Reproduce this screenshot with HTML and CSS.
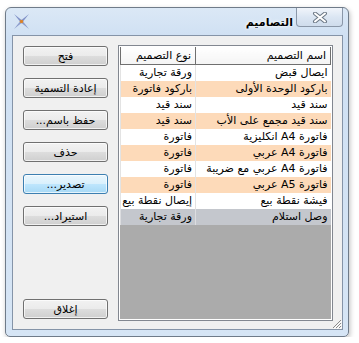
FILE: index.html
```html
<!DOCTYPE html>
<html lang="ar">
<head>
  <meta charset="UTF-8" />
  <title>التصاميم</title>
  <link rel="stylesheet" href="styles.css">
</head>
<body>

<div class="window">
  <div class="titlebar">
    <svg class="app-icon" width="15" height="15" viewBox="0 0 15 15">
      <polygon points="0,0 7.5,6 6,7.5" fill="#7f90c6" />
      <polygon points="15,0 7.5,6 9,7.5" fill="#7f90c6" />
      <polygon points="0,15 6,7.5 7.5,9" fill="#8c9ccc" />
      <polygon points="15,15 9,7.5 7.5,9" fill="#8c9ccc" />
      <circle cx="7.5" cy="7.5" r="1.8" fill="#d9822b" />
    </svg>
    <div class="title">التصاميم</div>
    <div class="close-btn">
      <svg width="16" height="11" viewBox="0 0 16 11">
        <path d="M3 1.5 L13 9.5 M13 1.5 L3 9.5" stroke="#6b7785" stroke-width="4" stroke-linecap="round" />
        <path d="M3 1.5 L13 9.5 M13 1.5 L3 9.5" stroke="#ffffff" stroke-width="2" stroke-linecap="round" />
      </svg>
    </div>
  </div>

  <div class="client">
    <div class="buttons">
      <button class="btn">فتح</button>
      <button class="btn">إعادة التسمية</button>
      <button class="btn">حفظ باسم...</button>
      <button class="btn">حذف</button>
      <button class="btn focused">تصدير...</button>
      <button class="btn">استيراد...</button>
      <button class="btn close">إغلاق</button>
    </div>

    <div class="grid">
      <table>
        <thead>
          <tr><th class="col-name">اسم التصميم</th><th class="col-type">نوع التصميم</th></tr>
        </thead>
        <tbody>
          <tr><td>ايصال قبض</td><td>ورقة تجارية</td></tr>
          <tr class="alt"><td>باركود الوحدة الأولى</td><td>باركود فاتورة</td></tr>
          <tr><td>سند قيد</td><td>سند قيد</td></tr>
          <tr class="alt"><td>سند قيد مجمع على الأب</td><td>سند قيد</td></tr>
          <tr><td>فاتورة A4 انكليزية</td><td>فاتورة</td></tr>
          <tr class="alt"><td>فاتورة A4 عربي</td><td>فاتورة</td></tr>
          <tr><td>فاتورة A4 عربي مع ضريبة</td><td>فاتورة</td></tr>
          <tr class="alt"><td>فاتورة A5 عربي</td><td>فاتورة</td></tr>
          <tr><td>فيشة نقطة بيع</td><td>إيصال نقطة بيع</td></tr>
          <tr class="selected"><td>وصل استلام</td><td>ورقة تجارية</td></tr>
        </tbody>
      </table>
    </div>

    <svg class="grip" width="12" height="12" viewBox="0 0 12 12">
      <path d="M11 3 L3 11 M11 6 L6 11 M11 9 L9 11" stroke="#8a8a8a" stroke-width="1" />
      <path d="M12 4 L4 12 M12 7 L7 12 M12 10 L10 12" stroke="#ffffff" stroke-width="1" />
    </svg>
  </div>
</div>

</body>
</html>
```

FILE: styles.css
```css
:root {
  --frame: #d3e3f5;
  --frame-edge: #6f7b89;
  --client-bg: #f0f0f0;
  --peach: #fddab9;
  --selected: #c4c7cd;
  --empty: #ababab;
}

body {
  margin: 0;
  background: #ffffff;
  font-family: "DejaVu Sans", sans-serif;
  font-size: 11px;
  color: #000000;
}

.window {
  margin: 7px 0 0 5px;
  width: 342px;
  height: 328px;
  border: 1px solid var(--frame-edge);
  border-radius: 6px 6px 5px 5px;
  background: linear-gradient(#dbe8f6, #cfe0f3 30px, #d6e5f5);
  box-shadow: 1px 2px 5px rgba(0, 0, 0, 0.25);
  display: flex;
  flex-direction: column;
  position: relative;
}

.titlebar {
  height: 27px;
  display: flex;
  align-items: flex-start;
  padding: 0 5px 0 8px;
}

.app-icon {
  margin-top: 6px;
}

.title {
  flex: 1;
  text-align: right;
  direction: rtl;
  font-weight: bold;
  font-size: 11px;
  margin-top: 8px;
  padding-right: 3px;
  text-shadow: 0 0 4px #ffffff, 0 0 2px #ffffff;
}

.close-btn {
  width: 45px;
  height: 18px;
  border: 1px solid #8a97a8;
  border-top: none;
  border-radius: 0 0 4px 4px;
  background: linear-gradient(#f1f5fb, #dbe6f3 50%, #cfdcec);
  display: flex;
  align-items: center;
  justify-content: center;
}

.client {
  flex: 1;
  margin: 0 5px 6px 6px;
  border: 1px solid #8594a8;
  background: var(--client-bg);
  display: flex;
  padding: 9px 9px 8px 10px;
  position: relative;
}

.buttons {
  width: 85px;
  display: flex;
  flex-direction: column;
  gap: 12px;
  padding-top: 1px;
}

.btn {
  height: 20px;
  margin: 0;
  padding: 0;
  border: 1px solid #707070;
  border-radius: 3px;
  background: linear-gradient(#f2f2f2, #ebebeb 50%, #dddddd 51%, #cfcfcf);
  font-family: "DejaVu Sans", sans-serif;
  font-size: 11px;
  color: #000000;
  direction: rtl;
  box-shadow: inset 0 0 0 1px rgba(255, 255, 255, 0.7);
}

.btn.focused {
  border-color: #3c7fb1;
  background: linear-gradient(#eaf6fd, #d9f0fc 50%, #bee6fd 51%, #a7d9f5);
}

.btn.close {
  margin-top: auto;
  margin-bottom: 2px;
}

.grid {
  flex: 1;
  margin-left: 10px;
  border: 1px solid #828790;
  padding: 1px;
  background: var(--empty);
  box-shadow: inset 0 0 0 1px #ffffff;
}

table {
  width: 100%;
  border-collapse: collapse;
  direction: rtl;
  table-layout: fixed;
}

th {
  height: 17px;
  padding: 0 4px;
  text-align: right;
  font-weight: normal;
  background: linear-gradient(#ffffff, #f4f4f4);
  border-bottom: 1px solid #6f6f6f;
  border-left: 1px solid #6f6f6f;
  white-space: nowrap;
}

th.col-name {
  width: 126px;
  border-right: 1px solid #6f6f6f;
}

td {
  height: 16px;
  padding: 0 3px 0 2px;
  text-align: right;
  white-space: nowrap;
  overflow: hidden;
  background: #ffffff;
  border-left: 1px solid #e3e3e3;
  line-height: 16px;
}

tr.alt td {
  background: var(--peach);
}

tr.selected td {
  background: var(--selected);
  border-left-color: #dcdde0;
}

.grip {
  position: absolute;
  right: 0;
  bottom: 0;
}
```
